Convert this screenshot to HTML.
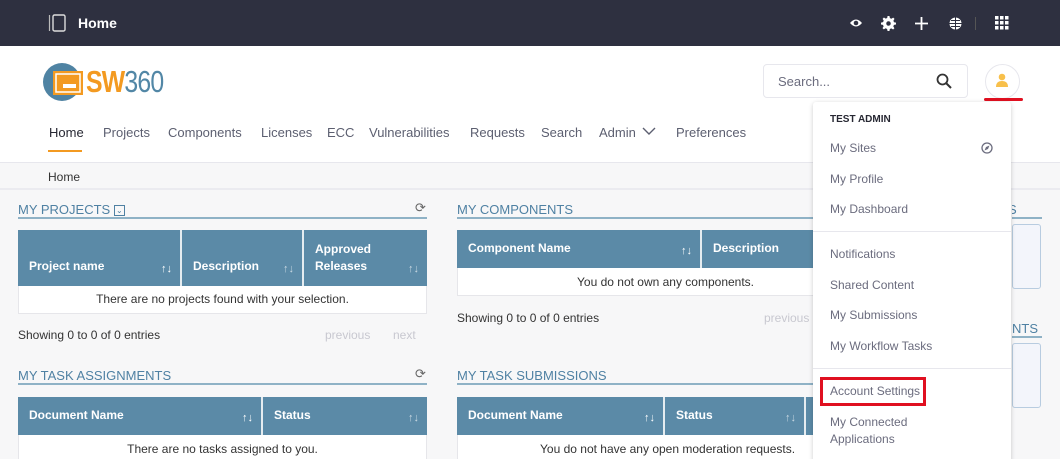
<!DOCTYPE html>
<html><head><style>
*{box-sizing:border-box;margin:0;padding:0}
html,body{width:1060px;height:459px;overflow:hidden}
body{font-family:"Liberation Sans",sans-serif;background:#f7f7f8;position:relative;color:#333;font-size:12px}
.abs{position:absolute}
.top{left:0;top:0;width:1060px;height:46px;background:#2e3040}
.hdr{left:0;top:46px;width:1060px;height:116px;background:#fff}
.bc{left:0;top:162px;width:1060px;height:28px;background:#f7f7f8;border-top:1px solid #e7e7ed;border-bottom:2px solid #ebebf0}
.nav{top:125px;font-size:13px;color:#5c5f70}
.h{font-size:13px;color:#4f81a3;border-bottom:2px solid #8fb2c6;height:17px}
.th{background:#5b8aa7;color:#fff;font-weight:bold;font-size:12px}
.tc{position:absolute;top:0;height:40px;border-right:2px solid #e5ecf0}
.tc span{position:absolute;left:11px;bottom:11px;line-height:17px}
.arr{position:absolute;right:8px;bottom:11px;color:#c9d8e2;font-size:11px;font-style:normal}
.row{background:#fff;border:1px solid #e6e6ea;border-top:none;text-align:center;font-size:12px;color:#333}
.dd{left:813px;top:102px;width:198px;height:370px;background:#fff;box-shadow:0 1px 5px rgba(0,0,0,.2);border-radius:3px}
.dd div{position:absolute;left:17px;font-size:12px;color:#6b6c7e}
</style></head><body>
<div class="abs top">
 <svg class="abs" style="left:48px;top:14px" width="20" height="18"><path d="M1.5 1v16" stroke="#bbb" stroke-width="1.2"/><rect x="5" y="1" width="12" height="16" rx="1.5" fill="none" stroke="#ddd" stroke-width="1.4"/></svg>
 <div class="abs" style="left:78px;top:15px;color:#fff;font-weight:bold;font-size:14px">Home</div>
 <svg class="abs" style="left:849px;top:17px" width="14" height="12"><path d="M1 6Q7-1 13 6Q7 13 1 6Z" fill="#fff"/><circle cx="7" cy="6" r="2.3" fill="#2e3040"/></svg>
 <svg class="abs" style="left:881px;top:16px" width="15" height="15" viewBox="0 0 16 16"><path fill="#fff" d="M7 0h2l.5 2.2 1.6.7 1.9-1.2 1.4 1.4-1.2 1.9.7 1.6L16 7v2l-2.2.5-.7 1.6 1.2 1.9-1.4 1.4-1.9-1.2-1.6.7L9 16H7l-.5-2.2-1.6-.7-1.9 1.2-1.4-1.4 1.2-1.9-.7-1.6L0 9V7l2.2-.5.7-1.6-1.2-1.9L3.1 1.6l1.9 1.2 1.6-.7z"/><circle cx="8" cy="8" r="2.4" fill="#2e3040"/></svg>
 <svg class="abs" style="left:914px;top:16px" width="15" height="15"><path d="M7.5 1v13M1 7.5h13" stroke="#fff" stroke-width="1.8"/></svg>
 <svg class="abs" style="left:948px;top:16px" width="15" height="15"><circle cx="7.5" cy="7.5" r="6" fill="#fff"/><path d="M7.5 0v15M0 7.5h15M3 4.5h9M3 10.5h9" stroke="#2e3040" stroke-width="1"/></svg>
 <div class="abs" style="left:975px;top:17px;width:1px;height:13px;background:#555"></div>
 <svg class="abs" style="left:995px;top:16px" width="14" height="14"><g fill="#fff"><rect x="0" y="0" width="3.5" height="3.5"/><rect x="5" y="0" width="3.5" height="3.5"/><rect x="10" y="0" width="3.5" height="3.5"/><rect x="0" y="5" width="3.5" height="3.5"/><rect x="5" y="5" width="3.5" height="3.5"/><rect x="10" y="5" width="3.5" height="3.5"/><rect x="0" y="10" width="3.5" height="3.5"/><rect x="5" y="10" width="3.5" height="3.5"/><rect x="10" y="10" width="3.5" height="3.5"/></g></svg>
</div>
<div class="abs hdr"></div>
<svg class="abs" style="left:42px;top:62px" width="45" height="42"><circle cx="20" cy="20" r="19" fill="#4f83a3"/><rect x="11" y="9" width="30" height="24" fill="#f39a21"/><rect x="14" y="12" width="24" height="18" fill="none" stroke="#fff" stroke-width="1.5"/><rect x="21" y="22" width="13" height="4" fill="#fff"/></svg>
<div class="abs" style="left:86px;top:64px;font-size:31px;font-weight:bold;letter-spacing:-1px;transform:scaleX(.8);transform-origin:left"><span style="color:#f39a21">SW</span><span style="color:#5287a6;font-weight:normal">360</span></div>
<div class="abs nav" style="left:49px;color:#272833">Home</div>
<div class="abs" style="left:48px;top:150px;width:34px;height:2px;background:#f39a21"></div>
<div class="abs nav" style="left:103px">Projects</div>
<div class="abs nav" style="left:168px">Components</div>
<div class="abs nav" style="left:261px">Licenses</div>
<div class="abs nav" style="left:327px">ECC</div>
<div class="abs nav" style="left:369px">Vulnerabilities</div>
<div class="abs nav" style="left:470px">Requests</div>
<div class="abs nav" style="left:541px">Search</div>
<div class="abs nav" style="left:599px">Admin</div>
<svg class="abs" style="left:642px;top:127px" width="14" height="9"><path d="M1 1l6 6 6-6" fill="none" stroke="#5c5f70" stroke-width="1.4"/></svg>
<div class="abs nav" style="left:676px">Preferences</div>
<div class="abs" style="left:763px;top:64px;width:205px;height:34px;border:1px solid #e7e7ed;border-radius:4px;background:#fff"></div>
<div class="abs" style="left:778px;top:74px;font-size:13px;color:#6b6c7e">Search...</div>
<svg class="abs" style="left:936px;top:73px" width="16" height="16"><circle cx="6.5" cy="6.5" r="5" fill="none" stroke="#333" stroke-width="1.8"/><path d="M10 10l5 5" stroke="#333" stroke-width="2"/></svg>
<div class="abs" style="left:985px;top:64px;width:35px;height:35px;border-radius:50%;border:1px solid #e7e7ed;background:#fff"></div>
<svg class="abs" style="left:994px;top:72px" width="16" height="17"><circle cx="8" cy="5" r="3.3" fill="#f8c04b"/><path d="M2 15Q2 9 8 9Q14 9 14 15Z" fill="#f8c04b"/></svg>
<div class="abs" style="left:984px;top:98px;width:39px;height:3px;background:#e01020;border-radius:2px"></div>
<div class="abs bc"></div>
<div class="abs" style="left:48px;top:170px;font-size:12px;color:#333">Home</div>

<div class="abs h" style="left:18px;top:202px;width:409px">MY PROJECTS <span style="display:inline-block;width:11px;height:11px;border:1px solid #4f81a3;font-size:8px;line-height:9px;text-align:center;vertical-align:1px">⌄</span></div>
<div class="abs" style="left:415px;top:200px;color:#666;font-size:13px">⟳</div>
<div class="abs th" style="left:18px;top:230px;width:409px;height:56px">
 <div class="tc" style="left:0;width:164px;height:56px"><span>Project name</span><i class="arr" style="color:#fff">↑↓</i></div>
 <div class="tc" style="left:164px;width:122px;height:56px"><span>Description</span><i class="arr">↑↓</i></div>
 <div class="tc" style="left:286px;width:123px;height:56px;border:none"><span>Approved<br>Releases</span><i class="arr">↑↓</i></div>
</div>
<div class="abs row" style="left:18px;top:286px;width:409px;height:28px;line-height:27px">There are no projects found with your selection.</div>
<div class="abs" style="left:18px;top:328px">Showing 0 to 0 of 0 entries</div>
<div class="abs" style="left:325px;top:328px;color:#c8c8d0">previous</div>
<div class="abs" style="left:393px;top:328px;color:#c8c8d0">next</div>

<div class="abs h" style="left:18px;top:368px;width:409px">MY TASK ASSIGNMENTS</div>
<div class="abs" style="left:415px;top:366px;color:#666;font-size:13px">⟳</div>
<div class="abs th" style="left:18px;top:397px;width:409px;height:38px">
 <div class="tc" style="left:0;width:245px;height:38px"><span>Document Name</span><i class="arr" style="color:#fff">↑↓</i></div>
 <div class="tc" style="left:245px;width:164px;height:38px;border:none"><span>Status</span><i class="arr">↑↓</i></div>
</div>
<div class="abs row" style="left:18px;top:435px;width:409px;height:28px;line-height:28px">There are no tasks assigned to you.</div>

<div class="abs h" style="left:457px;top:202px;width:553px">MY COMPONENTS</div>
<div class="abs th" style="left:457px;top:230px;width:553px;height:38px">
 <div class="tc" style="left:0;width:245px;height:38px"><span>Component Name</span><i class="arr" style="color:#fff">↑↓</i></div>
 <div class="tc" style="left:245px;width:200px;height:38px"><span>Description</span></div>
</div>
<div class="abs row" style="left:457px;top:268px;width:553px;height:28px;line-height:28px;text-align:left;padding-left:119px">You do not own any components.</div>
<div class="abs" style="left:457px;top:311px">Showing 0 to 0 of 0 entries</div>
<div class="abs" style="left:764px;top:311px;color:#c8c8d0">previous</div>

<div class="abs h" style="left:457px;top:368px;width:553px">MY TASK SUBMISSIONS</div>
<div class="abs th" style="left:457px;top:397px;width:553px;height:38px">
 <div class="tc" style="left:0;width:208px;height:38px"><span>Document Name</span><i class="arr" style="color:#fff">↑↓</i></div>
 <div class="tc" style="left:208px;width:141px;height:38px"><span>Status</span><i class="arr">↑↓</i></div>
</div>
<div class="abs row" style="left:457px;top:435px;width:553px;height:28px;line-height:28px;text-align:left;padding-left:82px">You do not have any open moderation requests.</div>

<div class="abs h" style="left:1012px;top:202px;width:30px;overflow:hidden;text-indent:-4px">S</div>
<div class="abs" style="left:1012px;top:224px;width:29px;height:65px;border:1px solid #b8cce0;border-radius:3px;background:#f3f5fb"></div>
<div class="abs h" style="left:1012px;top:321px;width:30px;overflow:hidden">NTS</div>
<div class="abs" style="left:1012px;top:343px;width:29px;height:65px;border:1px solid #b8cce0;border-radius:3px;background:#f3f5fb"></div>

<div class="abs dd">
 <div style="top:12px;font-size:10px;font-weight:bold;color:#272833">TEST ADMIN</div>
 <div style="top:39px">My Sites</div>
 <svg style="position:absolute;left:168px;top:40px" width="12" height="12"><circle cx="6" cy="6" r="5" fill="none" stroke="#6b6c7e" stroke-width="1.3"/><path d="M8.5 3.5L5 5 3.5 8.5 7 7z" fill="#6b6c7e"/></svg>
 <div style="top:70px">My Profile</div>
 <div style="top:100px">My Dashboard</div>
 <span style="position:absolute;left:0;top:129px;width:198px;height:1px;background:#e7e7ed"></span>
 <div style="top:145px">Notifications</div>
 <div style="top:176px">Shared Content</div>
 <div style="top:206px">My Submissions</div>
 <div style="top:237px">My Workflow Tasks</div>
 <span style="position:absolute;left:0;top:266px;width:198px;height:1px;background:#e7e7ed"></span>
 <span style="position:absolute;left:7px;top:275px;width:106px;height:29px;border:3px solid #e01020"></span>
 <div style="top:282px">Account Settings</div>
 <div style="top:312px;line-height:17px">My Connected<br>Applications</div>
</div>
</body></html>
